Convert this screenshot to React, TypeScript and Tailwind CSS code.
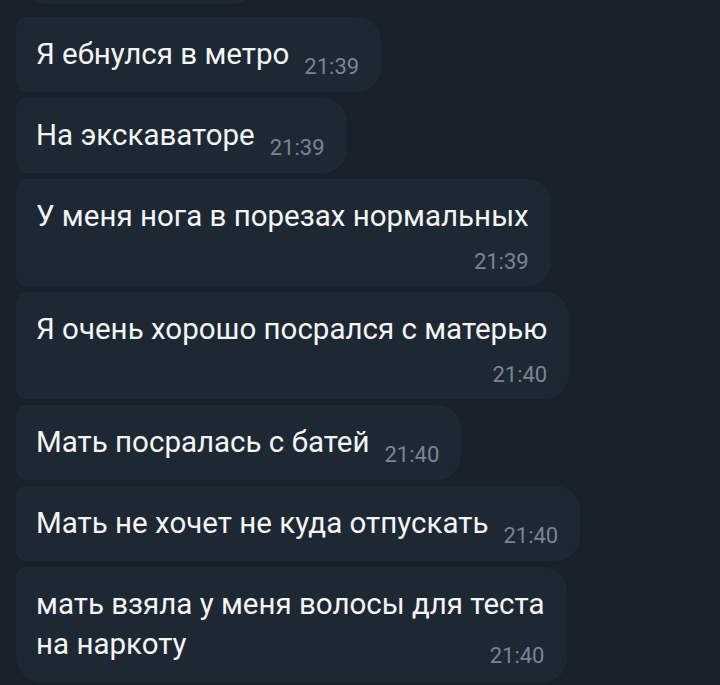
type Msg = {
  text: string[];
  time: string;
  stacked?: boolean;
  last?: boolean;
};

const messages: Msg[] = [
  { text: ["Я ебнулся в метро"], time: "21:39" },
  { text: ["На экскаваторе"], time: "21:39" },
  { text: ["У меня нога в порезах нормальных"], time: "21:39", stacked: true },
  { text: ["Я очень хорошо посрался с матерью"], time: "21:40", stacked: true },
  { text: ["Мать посралась с батей"], time: "21:40" },
  { text: ["Мать не хочет не куда отпускать"], time: "21:40" },
  {
    text: ["мать взяла у меня волосы для теста", "на наркоту"],
    time: "21:40",
    last: true,
  },
];

function Time({ value, className = "" }: { value: string; className?: string }) {
  return (
    <div className={`text-[22px] leading-[24px] h-[24px] text-[#788592] whitespace-nowrap ${className}`}>
      {value}
    </div>
  );
}

const textCls = "text-[29.5px] leading-[40px] text-[#f4f5f6] whitespace-nowrap";

function Bubble({ msg }: { msg: Msg }) {
  const corners = msg.last
    ? "rounded-tl-[10px] rounded-bl-[26px] rounded-r-[24px]"
    : "rounded-l-[10px] rounded-r-[24px]";

  // two rows: text on top, time on its own row
  if (msg.stacked) {
    return (
      <div className={`w-fit bg-[#1e2833] ${corners} pl-5 pr-[22px] pt-[17px] pb-[12px] flex flex-col`}>
        <div className={`${textCls} h-[40px]`}>{msg.text[0]}</div>
        <Time value={msg.time} className="self-end mt-[14px]" />
      </div>
    );
  }

  // multi-line text, time tucked into the end of the last line
  if (msg.text.length > 1) {
    return (
      <div className={`w-fit bg-[#1e2833] ${corners} pl-5 pr-[22px] pt-[17px] pb-[14px] flex flex-col`}>
        <div className={textCls}>
          {msg.text.map((line, i) => (
            <div key={i} className="h-[40px]">{line}</div>
          ))}
        </div>
        <Time value={msg.time} className="self-end -mt-[20px]" />
      </div>
    );
  }

  return (
    <div className={`w-fit bg-[#1e2833] ${corners} pl-5 pr-[22px] pt-[17px] pb-[13px] flex items-end`}>
      <div className={`${textCls} h-[40px] mb-[5px]`}>{msg.text[0]}</div>
      <Time value={msg.time} className="ml-[15px]" />
    </div>
  );
}

export default function App() {
  return (
    <div
      className="w-[720px] h-[685px] overflow-hidden bg-[#18202a]"
      style={{ fontFamily: "Roboto, 'Noto Sans', sans-serif" }}
    >
      <div className="flex flex-col gap-[6px] pl-4">
        {/* tail of the previous message, cut off by the top edge */}
        <div className="w-[240px] h-[60px] -mt-[56px] mb-[7px] bg-[#1e2833] rounded-tl-[10px] rounded-bl-[32px] rounded-r-[24px]" />
        {messages.map((m, i) => (
          <Bubble key={i} msg={m} />
        ))}
      </div>
    </div>
  );
}
